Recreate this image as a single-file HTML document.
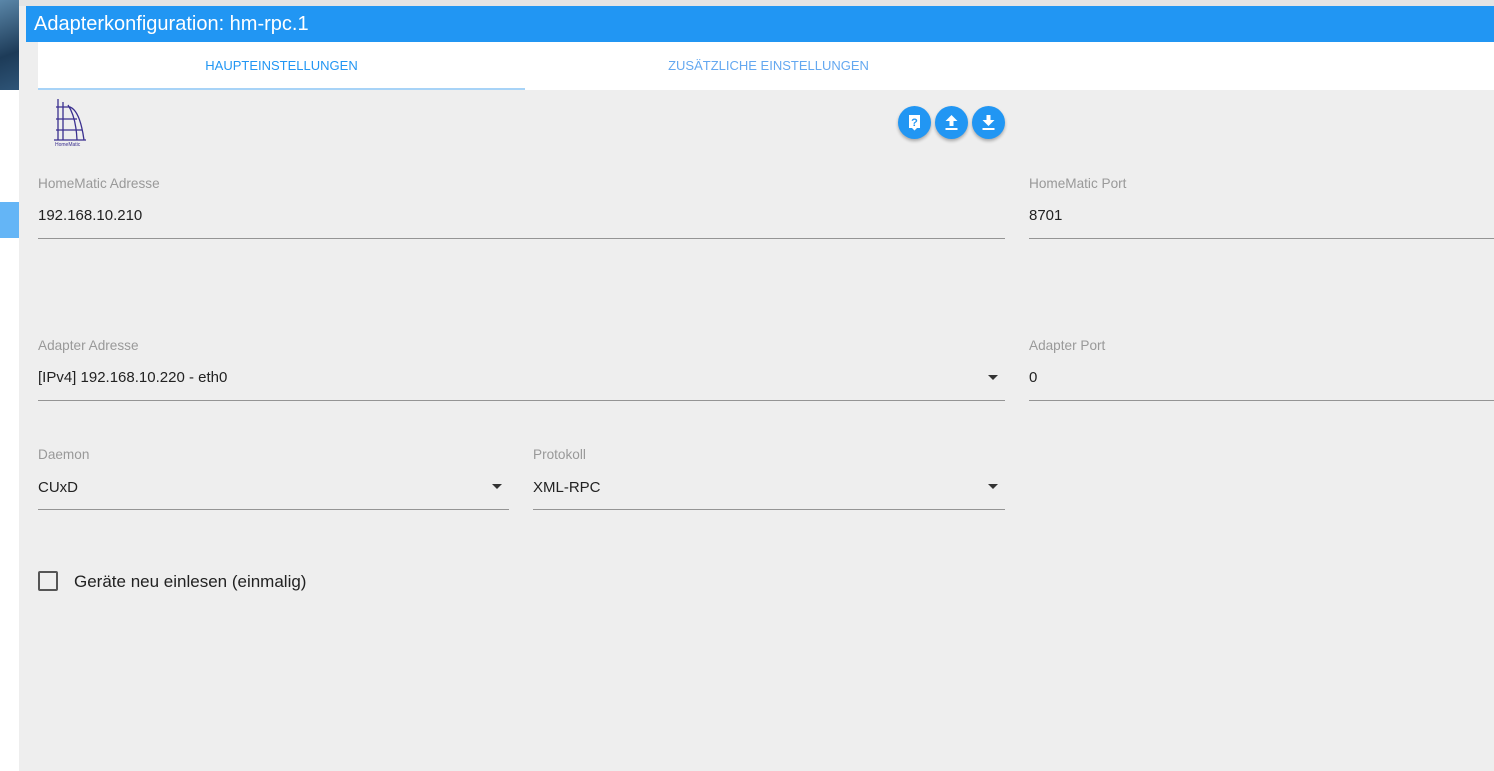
<!DOCTYPE html>
<html><head><style>
body{margin:0;width:1494px;height:771px;overflow:hidden;background:#eeeeee;font-family:"Liberation Sans",sans-serif;position:relative}
.a{position:absolute}
.lbl{font-size:13.6px;color:#999}
.val{font-size:15px;color:#222}
.line{height:1px;background:#949494}
.btn{width:33px;height:33px;border-radius:50%;background:#2196f3;box-shadow:0 2px 3px rgba(0,0,0,.3);top:106px}
.arr{width:0;height:0;border-left:5px solid transparent;border-right:5px solid transparent;border-top:5px solid #333}
</style></head><body>
<div class="a" style="left:0;top:0;width:19px;height:771px;background:#fff"></div>
<div class="a" style="left:0;top:0;width:19px;height:90px;background:linear-gradient(160deg,#5a86a8,#1d3b58 60%,#2e5477)"></div>
<div class="a" style="left:0;top:202px;width:19px;height:36px;background:#64b5f6"></div>
<div class="a" style="left:19px;top:0;width:1475px;height:6px;background:#e4e4e4"></div>
<div class="a" style="left:26px;top:6px;width:1468px;height:36px;background:#2196f3;color:#fff;font-size:20px;line-height:36px;padding-left:8px;box-sizing:border-box">Adapterkonfiguration: hm-rpc.1</div>
<div class="a" style="left:38px;top:42px;width:1456px;height:48px;background:#fff"></div>
<div class="a" style="left:38px;top:58px;width:487px;text-align:center;font-size:13px;color:#2196f3">HAUPTEINSTELLUNGEN</div>
<div class="a" style="left:525px;top:58px;width:487px;text-align:center;font-size:13px;color:#64a8f0">ZUSÄTZLICHE EINSTELLUNGEN</div>
<div class="a" style="left:38px;top:88px;width:487px;height:2px;background:#a7d3f7"></div>
<svg class="a" style="left:50px;top:97px" width="40" height="50" viewBox="0 0 40 50"><g stroke="#3a2f8f" fill="none" stroke-width="1.3"><path d="M8 2V43M13 5V43M6 10H20Q30 14 34 43M6 22H27M6 33H32M18 8Q26 20 27 43M4 43H36"/></g><text x="5" y="49" font-size="5" fill="#3a2f8f" font-family="Liberation Sans">HomeMatic</text></svg>
<div class="a btn" style="left:898px"><svg width="33" height="33"><path d="M11 9h11v13h-3l-2.5 2.5L14 22h-3z" fill="#fff"/><text x="16.5" y="20" text-anchor="middle" font-size="11" font-weight="bold" fill="#2196f3" font-family="Liberation Sans">?</text></svg></div>
<div class="a btn" style="left:935px"><svg width="33" height="33"><path d="M16.5 9l-6 6h4v5h4v-5h4zM10.5 22h12v2h-12z" fill="#fff"/></svg></div>
<div class="a btn" style="left:972px"><svg width="33" height="33"><path d="M14.5 9h4v5h4l-6 6-6-6h4zM10.5 22h12v2h-12z" fill="#fff"/></svg></div>

<div class="a lbl" style="left:38px;top:176px">HomeMatic Adresse</div>
<div class="a val" style="left:38px;top:207px">192.168.10.210</div>
<div class="a line" style="left:38px;top:238px;width:967px"></div>
<div class="a lbl" style="left:1029px;top:176px">HomeMatic Port</div>
<div class="a val" style="left:1029px;top:207px">8701</div>
<div class="a line" style="left:1029px;top:238px;width:465px"></div>

<div class="a lbl" style="left:38px;top:338px">Adapter Adresse</div>
<div class="a val" style="left:38px;top:369px">[IPv4] 192.168.10.220 - eth0</div>
<div class="a arr" style="left:988px;top:375px"></div>
<div class="a line" style="left:38px;top:400px;width:967px"></div>
<div class="a lbl" style="left:1029px;top:338px">Adapter Port</div>
<div class="a val" style="left:1029px;top:369px">0</div>
<div class="a line" style="left:1029px;top:400px;width:465px"></div>

<div class="a lbl" style="left:38px;top:447px">Daemon</div>
<div class="a val" style="left:38px;top:479px">CUxD</div>
<div class="a arr" style="left:492px;top:484px"></div>
<div class="a line" style="left:38px;top:509px;width:471px"></div>
<div class="a lbl" style="left:533px;top:447px">Protokoll</div>
<div class="a val" style="left:533px;top:479px">XML-RPC</div>
<div class="a arr" style="left:988px;top:484px"></div>
<div class="a line" style="left:533px;top:509px;width:472px"></div>

<div class="a" style="left:38px;top:571px;width:16px;height:16px;border:2px solid #555;border-radius:2px"></div>
<div class="a" style="left:74px;top:572px;font-size:17px;color:#222">Geräte neu einlesen (einmalig)</div>
</body></html>
